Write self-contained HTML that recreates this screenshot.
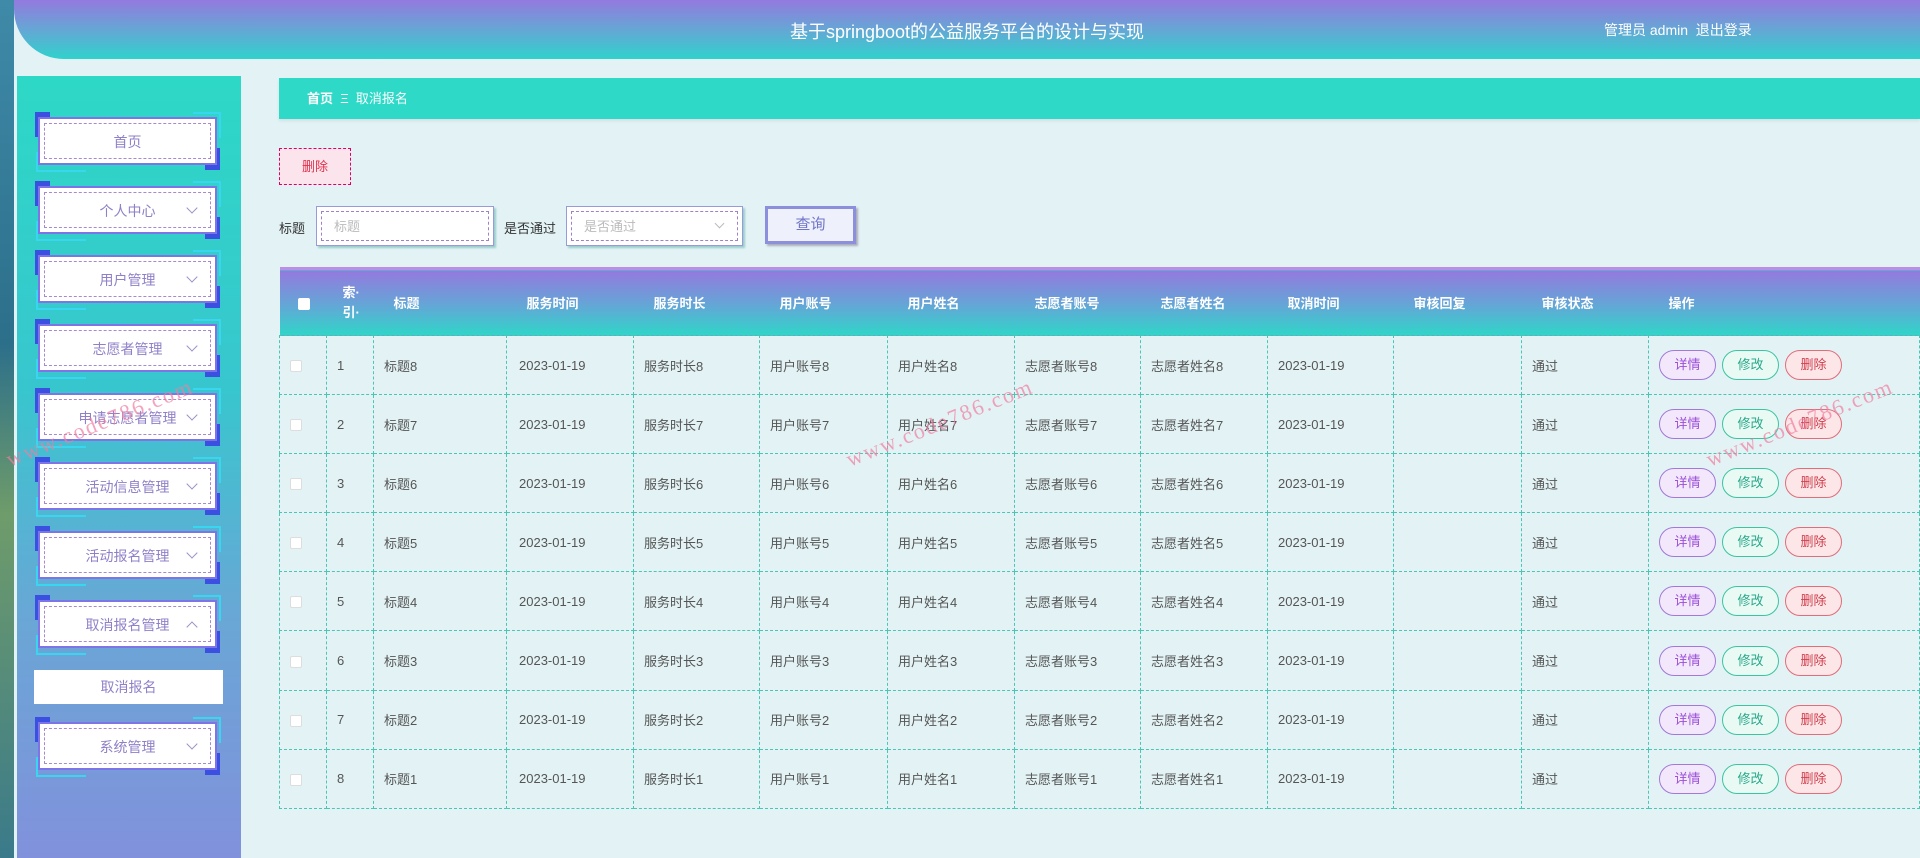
<!DOCTYPE html>
<html><head><meta charset="utf-8"><style>
*{box-sizing:border-box;margin:0;padding:0}
body{width:1920px;height:858px;overflow:hidden;background:#e3f3f5;font-family:"Liberation Sans","Noto Sans CJK SC",sans-serif;position:relative;color:#555}
.abs{position:absolute}
.left{left:0;top:0;width:14px;height:858px;background:linear-gradient(#3f8aa8,#2c6f8a 40%,#6f9c6a 60%,#3a7a8a)}
.hdr{left:14px;top:0;width:1906px;height:59px;background:linear-gradient(#9479de,#6aa2d6 45%,#30d2cc);border-radius:0 0 0 50px}
.title{left:14px;width:1906px;top:18px;text-align:center;color:#fff;font-size:18px}
.user{left:1604px;top:20px;color:#fff;font-size:14px}
.side{left:17px;top:76px;width:224px;height:782px;background:linear-gradient(#2dd8c6 0%,#38c6ce 40%,#6aa6d6 70%,#8191dc 100%)}
.mi{position:absolute;left:38px;width:179px;height:48px;background:#fff;border:2px solid #7d74e8}
.mi .in{position:absolute;left:4px;top:4px;right:4px;bottom:4px;border:1.5px dashed #a68ad0;text-align:center;line-height:36px;font-size:14px;color:#8f80c8}
.mi .ar{position:absolute;right:14px;top:11px;width:8px;height:8px;border-right:1px solid #9a90c8;border-bottom:1px solid #9a90c8;transform:rotate(45deg)}
.mi .up{transform:rotate(-135deg);top:16px}
.c1{position:absolute;left:-5px;top:-7px;width:15px;height:25px;background:#3b4fe0;z-index:-1}
.c2{position:absolute;right:-5px;bottom:-7px;width:15px;height:22px;background:#3b4fe0;z-index:-1}
.l1{position:absolute;right:-6px;top:-7px;width:28px;height:26px;border-top:2px solid #39d6f0;border-right:2px solid #39d6f0}
.l2{position:absolute;left:-4px;bottom:-9px;width:50px;height:20px;border-left:2px solid #39d6f0;border-bottom:2px solid #39d6f0}
.sub{left:34px;top:670px;width:189px;height:34px;background:#fff;text-align:center;line-height:34px;font-size:14px;color:#8f80c8}
.bc{left:279px;top:78px;width:1641px;height:41px;background:#2fd9c8;color:#fff;font-size:13px;line-height:41px;padding-left:28px;font-weight:bold;box-shadow:0 2px 3px rgba(0,0,0,.08)}
.del{left:279px;top:148px;width:72px;height:37px;background:#fbe4ec;border:1px dashed #d06;color:#e0304a;font-size:13px;text-align:center;line-height:35px}
.lab{font-size:13px;color:#333;top:218px}
.inp{top:206px;height:40px;background:#fff;border:1px solid #9a9ad8;box-shadow:2px 2px 2px #9cc}
.inp div{position:absolute;left:4px;top:4px;right:4px;bottom:4px;border:1.5px dashed #a080c8;font-size:13px;color:#bbb;line-height:29px;padding-left:12px}
.q{left:765px;top:206px;width:91px;height:38px;background:#eef0fb;border:3px solid #8b8fdc;box-shadow:2px 2px 2px #aab;color:#6f74c8;text-align:center;line-height:32px;font-size:15px}
table{position:absolute;left:279px;top:267px;width:1641px;border-collapse:collapse;font-size:13px}
th{height:67px;background:linear-gradient(#9479de,#62a8d6 55%,#2fd6c8);border-top:3px solid #b990e6;color:#fff;text-align:left;padding-left:20px;font-weight:bold}
td{height:59.1px;border:1px dashed #4cc6b4;padding-left:10px;color:#555;vertical-align:middle}
td.t{padding-left:12px}
.cb{display:inline-block;width:12px;height:12px;background:#fff;border:1px solid #ddd;border-radius:2px;vertical-align:middle}
.b{display:inline-block;width:57px;height:30px;border-radius:15px;text-align:center;line-height:28px;margin-right:6px;font-size:13px}
.b1{border:1px solid #a278d8;background:#f3e8fb;color:#9b4fd8}
.b2{border:1px solid #3cc4a0;background:#e9faf5;color:#2aa88a}
.b3{border:1px solid #e06d7a;background:#fde6e8;color:#d0404e}
.wm{color:#f07da0;font-family:"Liberation Serif",serif;font-size:22px;transform:rotate(-22deg);opacity:.7;letter-spacing:2px}
.sa{position:absolute;right:14px;top:8px;width:7px;height:7px;border-right:1px solid #bbb;border-bottom:1px solid #bbb;transform:rotate(45deg)}
</style></head><body>
<div class="abs left"></div>
<div class="abs hdr"></div>
<div class="abs title">基于springboot的公益服务平台的设计与实现</div>
<div class="abs user">管理员 admin &nbsp;退出登录</div>
<div class="abs side"></div>
<div style="position:absolute;left:0;top:0;z-index:1">
<div class="mi" style="top:117px"><i class="c1"></i><i class="c2"></i><i class="l1"></i><i class="l2"></i><div class="in">首页</div></div>
<div class="mi" style="top:186px"><i class="c1"></i><i class="c2"></i><i class="l1"></i><i class="l2"></i><div class="in">个人中心<i class="ar"></i></div></div>
<div class="mi" style="top:255px"><i class="c1"></i><i class="c2"></i><i class="l1"></i><i class="l2"></i><div class="in">用户管理<i class="ar"></i></div></div>
<div class="mi" style="top:324px"><i class="c1"></i><i class="c2"></i><i class="l1"></i><i class="l2"></i><div class="in">志愿者管理<i class="ar"></i></div></div>
<div class="mi" style="top:393px"><i class="c1"></i><i class="c2"></i><i class="l1"></i><i class="l2"></i><div class="in">申请志愿者管理<i class="ar"></i></div></div>
<div class="mi" style="top:462px"><i class="c1"></i><i class="c2"></i><i class="l1"></i><i class="l2"></i><div class="in">活动信息管理<i class="ar"></i></div></div>
<div class="mi" style="top:531px"><i class="c1"></i><i class="c2"></i><i class="l1"></i><i class="l2"></i><div class="in">活动报名管理<i class="ar"></i></div></div>
<div class="mi" style="top:600px"><i class="c1"></i><i class="c2"></i><i class="l1"></i><i class="l2"></i><div class="in">取消报名管理<i class="ar up"></i></div></div>
<div class="mi" style="top:722px"><i class="c1"></i><i class="c2"></i><i class="l1"></i><i class="l2"></i><div class="in">系统管理<i class="ar"></i></div></div>
</div>
<div class="abs sub">取消报名</div>
<div class="abs bc">首页 &nbsp;<span style="font-weight:normal">Ξ</span>&nbsp; <span style="font-weight:normal">取消报名</span></div>
<div class="abs del">删除</div>
<div class="abs lab" style="left:279px">标题</div>
<div class="abs inp" style="left:316px;width:178px"><div>标题</div></div>
<div class="abs lab" style="left:504px">是否通过</div>
<div class="abs inp" style="left:566px;width:177px"><div>是否通过<i class="sa"></i></div></div>
<div class="abs q">查询</div>
<table>
<colgroup><col style="width:47px"><col style="width:47px"><col style="width:133px"><col style="width:127px"><col style="width:126px"><col style="width:128px"><col style="width:127px"><col style="width:126px"><col style="width:127px"><col style="width:126px"><col style="width:128px"><col style="width:127px"><col></colgroup>
<tr><th style="padding-left:18px"><span class="cb" style="border:none"></span></th><th style="padding-left:16px;line-height:20px">索·<br>引·</th><th>标题</th><th>服务时间</th><th>服务时长</th><th>用户账号</th><th>用户姓名</th><th>志愿者账号</th><th>志愿者姓名</th><th>取消时间</th><th>审核回复</th><th>审核状态</th><th>操作</th></tr>
<tr><td><span class="cb"></span></td><td>1</td><td>标题8</td><td class="t">2023-01-19</td><td>服务时长8</td><td>用户账号8</td><td>用户姓名8</td><td>志愿者账号8</td><td>志愿者姓名8</td><td>2023-01-19</td><td></td><td>通过</td><td><span class="b b1">详情</span><span class="b b2">修改</span><span class="b b3">删除</span></td></tr>
<tr><td><span class="cb"></span></td><td>2</td><td>标题7</td><td class="t">2023-01-19</td><td>服务时长7</td><td>用户账号7</td><td>用户姓名7</td><td>志愿者账号7</td><td>志愿者姓名7</td><td>2023-01-19</td><td></td><td>通过</td><td><span class="b b1">详情</span><span class="b b2">修改</span><span class="b b3">删除</span></td></tr>
<tr><td><span class="cb"></span></td><td>3</td><td>标题6</td><td class="t">2023-01-19</td><td>服务时长6</td><td>用户账号6</td><td>用户姓名6</td><td>志愿者账号6</td><td>志愿者姓名6</td><td>2023-01-19</td><td></td><td>通过</td><td><span class="b b1">详情</span><span class="b b2">修改</span><span class="b b3">删除</span></td></tr>
<tr><td><span class="cb"></span></td><td>4</td><td>标题5</td><td class="t">2023-01-19</td><td>服务时长5</td><td>用户账号5</td><td>用户姓名5</td><td>志愿者账号5</td><td>志愿者姓名5</td><td>2023-01-19</td><td></td><td>通过</td><td><span class="b b1">详情</span><span class="b b2">修改</span><span class="b b3">删除</span></td></tr>
<tr><td><span class="cb"></span></td><td>5</td><td>标题4</td><td class="t">2023-01-19</td><td>服务时长4</td><td>用户账号4</td><td>用户姓名4</td><td>志愿者账号4</td><td>志愿者姓名4</td><td>2023-01-19</td><td></td><td>通过</td><td><span class="b b1">详情</span><span class="b b2">修改</span><span class="b b3">删除</span></td></tr>
<tr><td><span class="cb"></span></td><td>6</td><td>标题3</td><td class="t">2023-01-19</td><td>服务时长3</td><td>用户账号3</td><td>用户姓名3</td><td>志愿者账号3</td><td>志愿者姓名3</td><td>2023-01-19</td><td></td><td>通过</td><td><span class="b b1">详情</span><span class="b b2">修改</span><span class="b b3">删除</span></td></tr>
<tr><td><span class="cb"></span></td><td>7</td><td>标题2</td><td class="t">2023-01-19</td><td>服务时长2</td><td>用户账号2</td><td>用户姓名2</td><td>志愿者账号2</td><td>志愿者姓名2</td><td>2023-01-19</td><td></td><td>通过</td><td><span class="b b1">详情</span><span class="b b2">修改</span><span class="b b3">删除</span></td></tr>
<tr><td><span class="cb"></span></td><td>8</td><td>标题1</td><td class="t">2023-01-19</td><td>服务时长1</td><td>用户账号1</td><td>用户姓名1</td><td>志愿者账号1</td><td>志愿者姓名1</td><td>2023-01-19</td><td></td><td>通过</td><td><span class="b b1">详情</span><span class="b b2">修改</span><span class="b b3">删除</span></td></tr>
</table>
<div class="abs wm" style="left:0;top:410px;z-index:3">www.code786.com</div>
<div class="abs wm" style="left:840px;top:410px;z-index:3">www.code786.com</div>
<div class="abs wm" style="left:1700px;top:410px;z-index:3">www.code786.com</div>
</body></html>
